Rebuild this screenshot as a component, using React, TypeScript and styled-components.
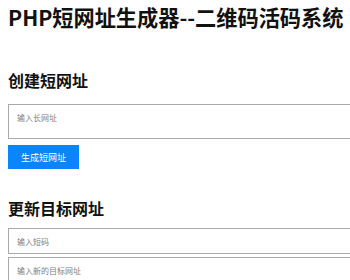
import React from 'react';
import styled, { createGlobalStyle } from 'styled-components';

const GlobalStyle = createGlobalStyle`
  body {
    margin: 0;
    background: #fff;
    font-family: "Noto Sans CJK SC", "Noto Sans", sans-serif;
    color: #111;
  }
`;

export default function App() {
  return (
    <>
      <GlobalStyle />
      <Page>
        <Title children="PHP短网址生成器--二维码活码系统" />

        <SectionTitle $top={38} $bottom={13} children="创建短网址" />
        <LongUrl placeholder="输入长网址" />
        <Button children="生成短网址" />

        <SectionTitle $top={28} $bottom={9} children="更新目标网址" />
        <Field placeholder="输入短码" />
        <Field placeholder="输入新的目标网址" />
      </Page>
    </>
  );
}

const Page = styled.div`
  display: flex;
  flex-direction: column;
  align-items: flex-start;
  padding: 3px 8px;
  overflow: hidden;
`;

const Title = styled.h1`
  margin: 0;
  font-size: 21.2px;
  line-height: 28px;
  font-weight: 700;
  white-space: nowrap;
`;

const SectionTitle = styled.h2<{ $top: number; $bottom: number }>`
  margin: ${({ $top, $bottom }) => `${$top}px 0 ${$bottom}px`};
  font-size: 16px;
  line-height: 22px;
  font-weight: 700;
`;

const LongUrl = styled.textarea`
  box-sizing: border-box;
  width: 360px;
  height: 35px;
  margin: 0 0 6px;
  padding: 7px 8px;
  border: 1px solid #aaa;
  border-radius: 0;
  resize: none;
  font-family: inherit;
  font-size: 8px;
  line-height: 12px;
  outline: none;

  &::placeholder {
    color: #808080;
  }
`;

const Button = styled.button`
  width: 71px;
  height: 24px;
  padding: 0;
  border: none;
  border-radius: 0;
  background: #0a84ff;
  color: #fff;
  font-family: inherit;
  font-size: 9px;
  cursor: pointer;
`;

const Field = styled.input`
  box-sizing: border-box;
  width: 360px;
  height: 26px;
  margin: 0 0 3px;
  padding: 0 8px;
  border: 1px solid #aaa;
  border-radius: 0;
  font-family: inherit;
  font-size: 8px;
  outline: none;

  &::placeholder {
    color: #808080;
  }
`;
